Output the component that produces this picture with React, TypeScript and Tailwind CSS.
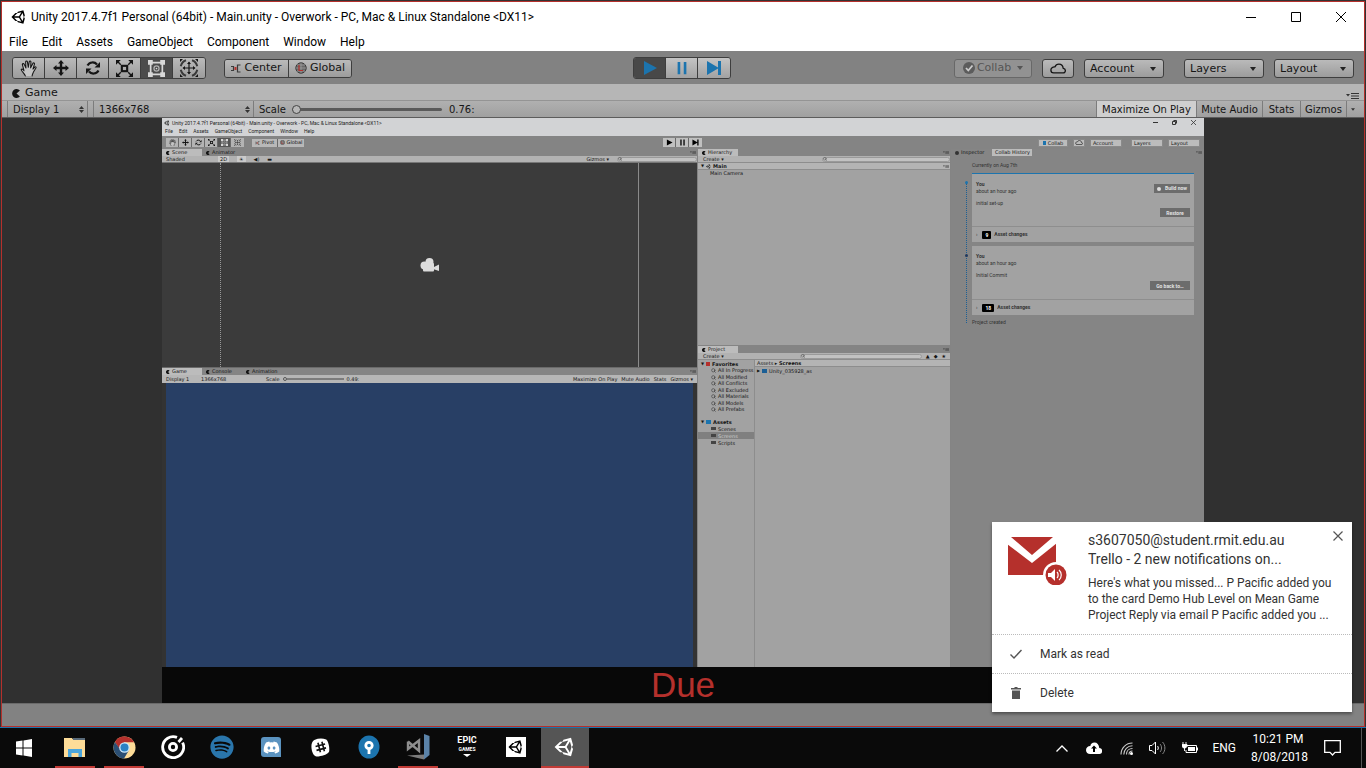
import React from "react";
import { FaUnity, FaSpotify, FaDiscord } from "react-icons/fa";
import { Search } from "lucide-react";

const segoe = "font-[Roboto,'Noto_Sans',sans-serif]";
const verdana = "font-['DejaVu_Sans',Verdana,sans-serif]";

/* ---------- shared pieces ---------- */

function HandIcon({ className }: { className: string }) {
  return (
    <svg viewBox="0 0 16 16" className={className} fill="#c4c4c4" stroke="currentColor" strokeWidth="1" strokeLinecap="round" strokeLinejoin="round">
      <path d="M5 15c-.6-2-3-3.600-3.900-6 .7-.9 1.900-.3 2.700 1.200L2.200 4.200c.2-1 1.400-1 1.800-.1L5.600 7.500 5.300 1.700c.2-.9 1.500-.9 1.700 0l.8 5.200 .9-5.400c.4-.9 1.600-.6 1.600.4L10 7.400l2.200-4.400c.6-.7 1.700-.1 1.400.8L12.200 8.500l1.900-2c.8-.3 1.300.4.9 1.100L12.800 11c-.6 1.700-1.200 2.500-1.400 4" />
    </svg>
  );
}
function MoveIcon({ className }: { className: string }) {
  return (
    <svg viewBox="0 0 16 16" className={className} fill="currentColor">
      <path d="M8 0l3 3.500H9.200v3.300h3.300V5L16 8l-3.500 3V9.200H9.200v3.300H11L8 16l-3-3.500h1.800V9.200H3.500V11L0 8l3.500-3v1.800h3.300V3.500H5z" />
    </svg>
  );
}
function RotateIcon({ className }: { className: string }) {
  return (
    <svg viewBox="0 0 16 16" className={className} fill="none" stroke="currentColor" strokeWidth="2.200">
      <path d="M2.500 5.500C4.500 1.800 9.500 1.500 12 4.500M13.500 10.500c-2 3.700-7 4-9.500 1" />
      <path d="M15 2v5.500H9.500zM1 14V8.500h5.500z" fill="currentColor" stroke="none" />
    </svg>
  );
}
function ScaleIcon({ className }: { className: string }) {
  return (
    <svg viewBox="0 0 16 16" className={className} fill="none" stroke="currentColor">
      <rect x="5.500" y="5.500" width="5" height="5" strokeWidth="2" />
      <path d="M1 1l3.500 3.500M15 1l-3.500 3.500M1 15l3.500-3.500M15 15l-3.500-3.500" strokeWidth="1.300" />
      <path d="M0 0h4.500L0 4.500zM16 0v4.500L11.500 0zM0 16v-4.500L4.500 16zM16 16h-4.500l4.500-4.500z" fill="currentColor" stroke="none" />
    </svg>
  );
}
function RectIcon({ className }: { className: string }) {
  return (
    <svg viewBox="0 0 16 16" className={className} fill="none" stroke="#d8d8d8">
      <path d="M2.500 2.500h11v11h-11z" strokeWidth="1.600" />
      <path d="M0 0h4.500v4.500H0zM11.500 0H16v4.500h-4.500zM0 11.500h4.500V16H0zM11.500 11.500H16V16h-4.500z" fill="#d8d8d8" stroke="none" />
      <circle cx="8" cy="8" r="2.400" stroke="#b0b0b0" strokeWidth="1.200" />
      <circle cx="8" cy="8" r=".8" fill="#d8d8d8" stroke="none" />
    </svg>
  );
}
function TransformIcon({ className }: { className: string }) {
  return (
    <svg viewBox="0 0 20 18" className={className} fill="none" stroke="currentColor">
      <path d="M10 3.500v11M4.500 9h11" strokeWidth="1.200" />
      <path d="M10 2.500l2 2.500H8zM10 15.500l2-2.500H8zM3.500 9L6 7v4zM16.500 9L14 7v4z" fill="currentColor" stroke="none" />
      <path d="M1.800 7.300c.6-2.800 2.500-5 5.200-6M18.200 7.300c-.6-2.800-2.500-5-5.200-6M1.800 10.700c.6 2.800 2.500 5 5.200 6M18.200 10.700c-.6 2.800-2.500 5-5.200 6" strokeWidth="2" stroke="#3a3a3a" />
      <path d="M1 0h3L1 3zM19 0v3L16 0zM1 18v-3L4 18zM19 18h-3l3-3z" fill="currentColor" stroke="none" />
    </svg>
  );
}
function PlayIcon({ className }: { className: string }) {
  return <svg viewBox="0 0 16 16" className={className} fill="currentColor"><path d="M2 1l13 7-13 7z" /></svg>;
}
function PauseIcon({ className }: { className: string }) {
  return <svg viewBox="0 0 16 16" className={className} fill="currentColor"><path d="M3 1h3v14H3zM10 1h3v14h-3z" /></svg>;
}
function StepIcon({ className }: { className: string }) {
  return <svg viewBox="0 0 16 16" className={className} fill="currentColor"><path d="M1 1l11 6.500V1h3v14h-3V8.500L1 15z" /></svg>;
}
function CloudIcon({ className }: { className: string }) {
  return (
    <svg viewBox="0 0 18 12" className={className} fill="none" stroke="currentColor" strokeWidth="1.500" strokeLinejoin="round">
      <path d="M4 11h10.500a2.600 2.600 0 0 0 .3-5.200C14.600 3 12.600 1 10 1 7.800 1 6.300 2.300 5.500 4.200 3 4 1 5.600 1 7.800 1 9.700 2.300 11 4 11z" />
    </svg>
  );
}
function GlobeIcon({ className }: { className: string }) {
  return (
    <svg viewBox="0 0 12 12" className={className} fill="none" stroke="#3c3c3c" strokeWidth="1">
      <circle cx="6" cy="6" r="5.200" fill="#6a6a6a" />
      <path d="M6 1v10M1 6h10M2 3h8M2 9h8" stroke="#a5a5a5" strokeWidth=".7" />
      <path d="M4 3v5.500h4" stroke="#b5302c" strokeWidth="1.200" />
    </svg>
  );
}
function PivotIcon({ className }: { className: string }) {
  return (
    <svg viewBox="0 0 10 9" className={className} fill="none" stroke="#3a3a3a">
      <path d="M0 2.500h2.500v4H0M9.500 1H6.500v7h3" strokeWidth="1.200" />
      <rect x="3.500" y="3" width="2" height="3" fill="#b5302c" stroke="none" />
    </svg>
  );
}
function PacIcon({ className }: { className: string }) {
  return <svg viewBox="0 0 10 10" className={className} fill="currentColor"><path d="M8.800 1.600A5 5 0 1 0 8.800 8.400L5 5z" /></svg>;
}
function MenuGlyph({ className }: { className: string }) {
  return (
    <svg viewBox="0 0 13 6" className={className}>
      <path d="M0 1h4L2 3.500z" fill="#333" />
      <path d="M5 .5h8M5 3h8M5 5.500h8" stroke="#333" strokeWidth="1" />
    </svg>
  );
}

const raised = "border border-[#3e3e3e] bg-linear-to-b from-[#bababa] to-[#9c9c9c]";

function ToolSelect({ label, width }: { label: string; width: string }) {
  return (
    <div className={`relative ${width}`}>
      <select aria-label={label} className={`block h-[19px] w-full appearance-none rounded-[3px] pt-px pl-[5px] leading-4 ${raised}`}>
        <option>{label}</option>
      </select>
      <svg viewBox="0 0 6 4" className="pointer-events-none absolute top-2 right-2 h-1 w-1.5"><path d="M0 0h6L3 4z" fill="#222" /></svg>
    </div>
  );
}
function BarSelect({ name, value, width }: { name: string; value: string; width: string }) {
  return (
    <div className={`relative border-x border-[#7c7c7c] ${width}`}>
      <select aria-label={name} className="block h-4 w-full appearance-none bg-transparent pl-[5px]">
        <option>{value}</option>
      </select>
      <svg viewBox="0 0 5 7" className="pointer-events-none absolute top-[5px] right-[3px] h-[7px] w-[5px]"><path d="M0 3l2.500-3L5 3zM0 4h5L2.500 7z" fill="#333" /></svg>
    </div>
  );
}

/* ---------- main toolbar ---------- */

function Toolbar() {
  const tools = [
    { name: "Hand", icon: <HandIcon className="size-[17px]" /> },
    { name: "Move", icon: <MoveIcon className="size-4" /> },
    { name: "Rotate", icon: <RotateIcon className="size-4" /> },
    { name: "Scale", icon: <ScaleIcon className="size-[17px]" /> },
    { name: "Rect", icon: <RectIcon className="size-[17px]" /> },
    { name: "Transform", icon: <TransformIcon className="h-[18px] w-5" /> },
  ];
  const play = [
    { name: "Play", icon: <PlayIcon className="size-4" /> },
    { name: "Pause", icon: <PauseIcon className="size-3.5" /> },
    { name: "Step", icon: <StepIcon className="size-4" /> },
  ];
  return (
    <div className={`grid h-[33px] grid-cols-[1fr_auto_1fr] items-center bg-[#828282] pt-px text-[11px] text-[#151515] ${verdana}`}>
      <div className="flex items-center pl-2.5">
        <div className="flex overflow-hidden rounded-[3px] border border-[#3e3e3e]">
          {tools.map((t, i) => (
            <button key={t.name} aria-label={t.name} className={`flex h-5 w-8 items-center justify-center border-[#3e3e3e] not-last:border-r ${i === 4 ? "bg-[#4c4c4c]" : "bg-linear-to-b from-[#bababa] to-[#9c9c9c]"}`}>
              {t.icon}
            </button>
          ))}
        </div>
        <div className="ml-[18px] flex h-[19px] overflow-hidden rounded-[3px] border border-[#3e3e3e]">
          <button className="flex w-16 items-center justify-center gap-[3px] border-r border-[#3e3e3e] bg-linear-to-b from-[#bababa] to-[#9c9c9c]">
            <PivotIcon className="h-[9px] w-2.5" />Center
          </button>
          <button className="flex w-[62px] items-center justify-center gap-[3px] bg-linear-to-b from-[#bababa] to-[#9c9c9c]">
            <GlobeIcon className="size-3" />Global
          </button>
        </div>
      </div>
      <div className="mr-0.5 flex overflow-hidden rounded-[3px] border border-[#3e3e3e] text-[#1c74ae]">
        {play.map((t, i) => (
          <button key={t.name} aria-label={t.name} className={`flex h-5 w-8 items-center justify-center border-[#3e3e3e] not-last:border-r ${i === 0 ? "bg-[#484848]" : "bg-linear-to-b from-[#c4c4c4] to-[#a2a2a2]"}`}>
            {t.icon}
          </button>
        ))}
      </div>
      <div className="flex items-center justify-end gap-2.5 pr-2.5">
        <button disabled className="flex h-[19px] w-[78px] items-center justify-center gap-0.5 rounded-[3px] border border-[#686868] bg-[#929292] text-[#555]">
          <svg viewBox="0 0 12 12" className="size-3"><circle cx="6" cy="6" r="6" fill="#5c5c5c" /><path d="M3 6l2.300 2.500L9.500 3.500" stroke="#ccc" strokeWidth="1.800" fill="none" /></svg>
          Collab
          <svg viewBox="0 0 6 4" className="ml-1 h-1 w-1.5"><path d="M0 0h6L3 4z" fill="#555" /></svg>
        </button>
        <button aria-label="Services" className={`flex h-[19px] w-8 items-center justify-center rounded-[3px] ${raised}`}><CloudIcon className="h-[11px] w-4" /></button>
        <ToolSelect label="Account" width="w-20" />
        <div className="w-0" />
        <ToolSelect label="Layers" width="w-20" />
        <ToolSelect label="Layout" width="w-20" />
      </div>
    </div>
  );
}

function GameHeader() {
  return (
    <div className={`text-[10px] text-[#151515] ${verdana}`}>
      <div className="flex h-[17px] items-center justify-between border-b border-[#949494] bg-[#b6b6b6] pl-2.5 text-[11px]">
        <span className="flex items-center gap-1 pt-0.5"><PacIcon className="size-[9px]" />Game</span>
        <MenuGlyph className="mt-2 mr-[5px] h-1.5 w-[13px]" />
      </div>
      <div className="flex h-[17px] items-center border-b border-[#5c5c5c] bg-linear-to-b from-[#b0b0b0] to-[#a0a0a0] pl-[5px]">
        <BarSelect name="Display" value="Display 1" width="w-[81px]" />
        <div className="w-[5px]" />
        <BarSelect name="Aspect" value="1366x768" width="w-[161px]" />
        <label htmlFor="scale" className="ml-[5px]">Scale</label>
        <input
          id="scale" type="range" min="0" max="100" defaultValue="0"
          className="ml-1.5 h-2.5 w-[150px] appearance-none bg-transparent [&::-webkit-slider-runnable-track]:h-[3px] [&::-webkit-slider-runnable-track]:rounded-full [&::-webkit-slider-runnable-track]:bg-[#5a5a5a] [&::-webkit-slider-thumb]:-mt-[3px] [&::-webkit-slider-thumb]:size-[9px] [&::-webkit-slider-thumb]:appearance-none [&::-webkit-slider-thumb]:rounded-full [&::-webkit-slider-thumb]:border [&::-webkit-slider-thumb]:border-[#444] [&::-webkit-slider-thumb]:bg-[#b8b8b8]"
        />
        <span className="ml-[7px]">0.76:</span>
        <div className="ml-auto flex h-full divide-x divide-[#7c7c7c] border-l border-[#7c7c7c] text-center">
          <button className="w-25 bg-[#cfcfcf]">Maximize On Play</button>
          <button className="w-[66px]">Mute Audio</button>
          <button className="w-[38px]">Stats</button>
          <button className="w-[46px]">Gizmos</button>
          <button aria-label="Gizmo options" className="mr-1.5 w-[11px]"><svg viewBox="0 0 6 4" className="mx-auto h-[3px] w-1"><path d="M0 0h6L3 4z" fill="#333" /></svg></button>
        </div>
      </div>
    </div>
  );
}

/* ---------- editor shown inside the game view ---------- */

const mini = "border border-[#8a8a8a] bg-[#bcbcbc]";

function MiniTop() {
  return (
    <>
      <div className={`h-[18px] bg-[#d2d3d5] text-[5px] leading-[8px] text-[#222] ${segoe}`}>
        <div className="flex h-[9px] items-center px-0.5">
          <FaUnity className="mr-0.5 size-[6px]" />
          Unity 2017.4.7f1 Personal (64bit) - Main.unity - Overwork - PC, Mac &amp; Linux Standalone &lt;DX11&gt;
          <span className="mr-1.5 ml-auto flex items-center gap-3.5">
            <svg viewBox="0 0 5 5" className="size-[5px]"><path d="M0 2.500h5" stroke="#333" /></svg>
            <svg viewBox="0 0 5 5" className="size-[5px]" fill="none" stroke="#333"><path d="M.5 1.500h3v3h-3zM1.500 .5h3v3" /></svg>
            <svg viewBox="0 0 5 5" className="size-[5px]"><path d="M0 0l5 5M5 0L0 5" stroke="#333" strokeWidth=".8" /></svg>
          </span>
        </div>
        <div className="flex gap-1.5 px-[3px]">
          {["File", "Edit", "Assets", "GameObject", "Component", "Window", "Help"].map((m) => <span key={m}>{m}</span>)}
        </div>
      </div>
      <div className="grid h-[13px] grid-cols-[1fr_auto_1fr] items-center text-[5px]">
        <div className="flex items-center gap-2 pl-1">
          <div className="flex divide-x divide-[#6a6a6a]">
            {[HandIcon, MoveIcon, RotateIcon, ScaleIcon, RectIcon, TransformIcon].map((Icon, i) => (
              <span key={i} className={`flex h-[9px] w-[13px] items-center justify-center ${i === 4 ? "bg-[#555]" : "bg-[#b4b4b4]"}`}><Icon className="size-[7px]" /></span>
            ))}
          </div>
          <div className="flex h-2 divide-x divide-[#6a6a6a] bg-[#b8b8b8]">
            <span className="flex w-[26px] items-center justify-center gap-0.5"><PivotIcon className="h-1 w-[5px]" />Pivot</span>
            <span className="flex w-[26px] items-center justify-center gap-0.5"><GlobeIcon className="size-[5px]" />Global</span>
          </div>
        </div>
        <div className="flex divide-x divide-[#6a6a6a] bg-[#c0c0c0] text-black">
          {[PlayIcon, PauseIcon, StepIcon].map((Icon, i) => (
            <span key={i} className="flex h-[9px] w-[13px] items-center justify-center"><Icon className="size-[7px]" /></span>
          ))}
        </div>
        <div className="flex justify-end gap-[5px] pr-1 leading-[6px]">
          <span className={`flex w-[30px] items-center justify-center gap-0.5 ${mini}`}><i className="h-1 w-[3px] bg-[#1c74ae]" />Collab</span>
          <span className={`flex w-3 items-center justify-center ${mini}`}><CloudIcon className="h-[5px] w-2" /></span>
          <span className={`mr-1 w-8 pl-0.5 ${mini}`}>Account</span>
          <span className={`w-8 pl-0.5 ${mini}`}>Layers</span>
          <span className={`w-8 pl-0.5 ${mini}`}>Layout</span>
        </div>
      </div>
    </>
  );
}

function MiniTabs({ tabs }: { tabs: string[] }) {
  return (
    <div className="flex h-[7px] items-center bg-[#848484] leading-[7px]">
      {tabs.map((t, i) => (
        <span key={t} className={`flex w-10 items-center gap-0.5 pl-1 ${i === 0 ? "bg-[#bcbcbc]" : ""}`}>
          <PacIcon className="size-1" />{t}
        </span>
      ))}
      <MenuGlyph className="mr-px ml-auto h-[3px] w-[6px]" />
    </div>
  );
}

function MiniSearch({ width }: { width: string }) {
  return (
    <span className={`flex h-[5px] items-center rounded-full border border-[#9a9a9a] bg-[#c2c2c2] ${width}`}><Search className="size-1" /></span>
  );
}

function CameraGizmo() {
  return (
    <svg viewBox="0 0 20 14" className="h-3.5 w-5" fill="#dcdcdc">
      <circle cx="4.500" cy="7.500" r="4" /><circle cx="9.500" cy="4" r="4" /><rect x="3" y="5" width="11" height="8.500" rx="1" /><path d="M13 9.500l6-3v6.500l-6-2z" />
    </svg>
  );
}

function ScenePanel() {
  return (
    <section className="flex h-[218px] flex-col">
      <MiniTabs tabs={["Scene", "Animator"]} />
      <div className="flex h-[7px] items-center gap-2 border-b border-[#777] bg-[#b2b2b2] pl-1 leading-[6px]">
        <span className="w-11">Shaded</span><span className="bg-[#cacaca] px-0.5">2D</span><span className="bg-[#cacaca] px-0.5">☀</span><span>◀)</span><span>▬</span>
        <span className="ml-auto">Gizmos ▾</span><MiniSearch width="w-20" />
      </div>
      <div className="grid flex-1 grid-cols-[59px_1fr_59px] bg-[#3b3b3b]">
        <div className="border-r border-dotted border-[#999]" />
        <div className="flex items-center justify-center"><CameraGizmo /></div>
        <div className="border-l border-[#8a8a8a]" />
      </div>
    </section>
  );
}

function MiniGamePanel() {
  return (
    <section className="flex flex-1 flex-col border-t border-[#6a6a6a]">
      <MiniTabs tabs={["Game", "Console", "Animation"]} />
      <div className="flex h-2 items-center bg-[#b6b6b6] px-1 leading-[6px]">
        <span className="w-[35px]">Display 1</span><span className="w-[65px]">1366x768</span><span>Scale</span>
        <i className="ml-1 size-1 rounded-full border border-[#555] bg-[#bbb]" /><i className="h-0.5 w-[57px] bg-[#7c7c7c]" /><span className="ml-0.5">0.49:</span>
        <span className="ml-auto flex gap-1"><span>Maximize On Play</span><span>Mute Audio</span><span>Stats</span><span>Gizmos ▾</span></span>
      </div>
      <div className="flex-1 border-x-4 border-[#333] bg-[#283f65]" />
    </section>
  );
}

function HierarchyPanel() {
  return (
    <section className="flex h-[196px] flex-col">
      <MiniTabs tabs={["Hierarchy"]} />
      <div className="flex h-[7px] items-center justify-between border-b border-[#8d8d8d] bg-[#b2b2b2] pl-[5px] leading-[6px]"><span>Create ▾</span><MiniSearch width="w-32" /></div>
      <div className="flex h-[7px] items-center gap-0.5 border-b border-[#8d8d8d] bg-[#b4b4b4] pl-[3px] font-bold leading-[6px]">
        <span className="text-[4px]">▼</span><FaUnity className="size-[5px]" />Main<MenuGlyph className="mr-px ml-auto h-[3px] w-[6px]" />
      </div>
      <div className="pl-3 leading-[7px]">Main Camera</div>
    </section>
  );
}

function ProjectPanel() {
  const favorites = ["All In Progress", "All Modified", "All Conflicts", "All Excluded", "All Materials", "All Models", "All Prefabs"];
  return (
    <section className="flex flex-1 flex-col border-t border-[#848484]">
      <MiniTabs tabs={["Project"]} />
      <div className="flex h-[7px] items-center border-b border-[#8d8d8d] bg-[#b2b2b2] pl-[5px] leading-[6px]">
        <span>Create ▾</span><span className="ml-auto"><MiniSearch width="w-[122px]" /></span><span className="ml-1 flex gap-1 pr-1"><i>▲</i><i>◆</i><i>★</i></span>
      </div>
      <div className="grid flex-1 grid-cols-[57px_1fr] leading-[6px]">
        <div className="border-r border-[#8d8d8d]">
          <div className="flex h-[7px] items-center gap-0.5 pl-[3px] font-bold"><span className="text-[4px]">▼</span><i className="size-1 bg-[#b5302c]" />Favorites</div>
          {favorites.map((f) => (
            <div key={f} className="flex h-1.5 items-center gap-0.5 pl-[13px] whitespace-nowrap odd:mt-px"><Search className="size-[5px]" />{f}</div>
          ))}
          <div className="mt-1.5 flex h-[7px] items-center gap-0.5 pl-[3px] font-bold"><span className="text-[4px]">▼</span><i className="h-1 w-[5px] bg-[#1c74ae]" />Assets</div>
          {["Scenes", "Screens", "Scripts"].map((f) => (
            <div key={f} className={`flex h-[7px] items-center gap-0.5 pl-[13px] ${f === "Screens" ? "bg-[#808080] text-[#ccc]" : ""}`}><i className="h-[3px] w-[5px] bg-[#444]" />{f}</div>
          ))}
        </div>
        <div>
          <div className="h-[7px] border-b border-[#8d8d8d] bg-[#b4b4b4] pl-0.5">Assets ▸ <b>Screens</b></div>
          <div className="flex items-center gap-0.5 pt-px pl-0.5"><span className="text-[4px]">▶</span><i className="h-1 w-[5px] bg-[#1c5f95]" />Unity_035928_as</div>
        </div>
      </div>
    </section>
  );
}

function HistoryCard({ note, build, action, count, active }: { note: string; build?: boolean; action: string; count: string; active?: boolean }) {
  return (
    <article className="relative mb-1 bg-[#a2a2a2] text-[#333]">
      <i className={`absolute top-2 -left-[7px] size-[3px] rounded-full ${active ? "bg-[#1c74ae]" : "bg-[#223a5e]"}`} />
      <div className={`flex h-[53px] justify-between pt-[7px] pr-1 pl-1 ${active ? "border-t border-[#1c74ae]" : ""}`}>
        <div className="leading-[7px]"><b className="block">You</b><span className="block">about an hour ago</span><span className="mt-[5px] block">{note}</span></div>
        <div className={`flex flex-col items-end gap-[15px] text-[#e2e2e2] ${build ? "pt-[3px]" : "pt-7"}`}>
          {build && <button className="flex h-[9px] w-9 items-center justify-center gap-1 bg-[#6c6c6c] font-bold"><i className="size-1 rounded-full bg-[#ddd]" />Build now</button>}
          <button className={`h-[9px] bg-[#6c6c6c] font-bold leading-[8px] ${build ? "w-[30px]" : "w-10"}`}>{action}</button>
        </div>
      </div>
      <div className="flex h-4 items-center gap-[3px] border-t border-[#8e8e8e] pl-1"><span>›</span><b className="ml-0.5 rounded-[1px] bg-black px-[3px] leading-[8px] text-white">{count}</b><b>Asset changes</b></div>
    </article>
  );
}

function HistoryPanel() {
  return (
    <section className="min-w-0 bg-[#858585]">
      <div className="flex h-[7px] items-center pl-1 leading-[7px]">
        <i className="mr-0.5 size-1 rounded-full bg-[#333]" /><span className="w-[31px]">Inspector</span><span className="w-10 bg-[#bcbcbc] pl-[3px] whitespace-nowrap">Collab History</span>
        <MenuGlyph className="mr-0.5 ml-auto h-[3px] w-[6px]" />
      </div>
      <div className={`pt-1.5 pr-2.5 pl-[21px] ${segoe}`}>
        <div className="mb-1 h-[7px] leading-[7px] text-[#333]">Currently on Aug 7th</div>
        <div className="relative">
          <i className="absolute top-2.5 -left-1.5 h-[140px] border-l border-dotted border-[#1c5f95]" />
          <HistoryCard note="initial set-up" build action="Restore" count="9" active />
          <HistoryCard note="Initial Commit" action="Go back to…" count="18" />
        </div>
        <div className="text-[#333]">Project created</div>
      </div>
    </section>
  );
}

function InnerEditor() {
  return (
    <div className={`flex flex-1 flex-col bg-[#848484] text-[5px] text-[#151515] ${verdana}`}>
      <MiniTop />
      <div className="grid flex-1 grid-cols-[535fr_252fr_253fr] gap-x-px">
        <div className="flex min-w-0 flex-col"><ScenePanel /><MiniGamePanel /></div>
        <div className="flex min-w-0 flex-col bg-[#a2a2a2]"><HierarchyPanel /><ProjectPanel /></div>
        <HistoryPanel />
      </div>
    </div>
  );
}

/* ---------- notification ---------- */

function Toast() {
  return (
    <aside className={`absolute right-3.5 bottom-14 w-[360px] bg-white text-[#333] shadow-[0_2px_3px_rgba(0,0,0,0.4)] ${segoe}`}>
      <div className="flex h-28 pt-[9px]">
        <svg viewBox="0 0 60 48" className="mt-1.5 ml-[15px] h-12 w-[60px] shrink-0">
          <path d="M1 0h48v38H1z" fill="#b5302c" />
          <path d="M0 0h4L25 18 46 0h4v6L25 26 0 7z" fill="#fff" />
          <circle cx="49" cy="38" r="13" fill="#fff" />
          <circle cx="49" cy="38" r="10.500" fill="#b5302c" />
          <path d="M41 36h3l4-4v12l-4-4h-3z" fill="#fff" />
          <path d="M50 35c1.500 1.500 1.500 4.500 0 6M52 33c3 2.500 3 7.500 0 10" stroke="#fff" strokeWidth="1.200" fill="none" />
        </svg>
        <div className="ml-[21px] min-w-0 flex-1">
          <h2 className="text-[14px] leading-[19px]">s3607050@student.rmit.edu.au<br />Trello - 2 new notifications on...</h2>
          <p className="mt-1.5 text-[12px] leading-4 whitespace-nowrap">Here's what you missed... P Pacific added you<br />to the card Demo Hub Level on Mean Game<br />Project Reply via email P Pacific added you ...</p>
        </div>
        <button aria-label="Close" className="absolute top-[9px] right-[9px]"><svg viewBox="0 0 10 10" className="size-2.5"><path d="M.5 .5l9 9M9.500 .5l-9 9" stroke="#555" strokeWidth="1.200" /></svg></button>
      </div>
      <button className="flex h-[39px] w-full items-center gap-[18px] border-t border-dotted border-[#bbb] pl-[18px] text-[12px]">
        <svg viewBox="0 0 12 10" className="h-2.5 w-3"><path d="M.5 5.500l3.500 3.500L11.500 1" fill="none" stroke="#555" strokeWidth="1.400" /></svg>Mark as read
      </button>
      <button className="flex h-[39px] w-full items-center gap-[18px] border-t border-dotted border-[#bbb] pl-[18px] text-[12px]">
        <svg viewBox="0 0 12 12" className="size-3" fill="#555"><path d="M1 1h3l1-1h2l1 1h3v1.500H1zM2 3.500h8V12H2z" /></svg>Delete
      </button>
    </aside>
  );
}

/* ---------- taskbar ---------- */

const taskIcons: { name: string; running?: boolean; icon: React.ReactNode }[] = [
  { name: "File Explorer", running: true, icon: (
    <svg viewBox="0 0 22 21" className="h-[21px] w-[22px]"><path d="M0 1h8l1.500 2H21v17H0z" fill="#fddc98" /><path d="M9 1h12v2H9z" fill="#5a6b7a" /><path d="M4 20v-8h14v8h-3.500v-4h-7v4z" fill="#4ba6dc" /></svg>) },
  { name: "Chrome", running: true, icon: (
    <svg viewBox="0 0 24 24" className="size-[23px]"><circle cx="12" cy="12" r="11.500" fill="#fddc98" /><path d="M2 6.300A11.500 11.500 0 0 1 22 6.500H12L7 14z" fill="#b5302c" /><path d="M2 6.300A11.500 11.500 0 0 0 11.500 23.500L16.500 15 7.500 14z" fill="#2b4f74" /><circle cx="12" cy="12" r="5.600" fill="#cde8fa" /><circle cx="12" cy="12" r="4.200" fill="#2c82c4" /></svg>) },
  { name: "Groove", icon: (
    <svg viewBox="0 0 24 24" className="size-6" fill="none" stroke="#fff"><path d="M16 2.400A10.500 10.500 0 1 0 21.600 7.600" strokeWidth="2.800" /><circle cx="12" cy="12" r="3.600" strokeWidth="2.800" /><path d="M17.500 7l3.500-4" strokeWidth="2.800" /></svg>) },
  { name: "Spotify", icon: <FaSpotify className="size-6 text-[#2a76ac]" /> },
  { name: "Discord", icon: (
    <span className="flex size-5 items-center justify-center rounded-[3px] rounded-br-none bg-[#5b93c0]"><FaDiscord className="size-[17px] text-white" /></span>) },
  { name: "Slack", icon: (
    <svg viewBox="0 0 20 20" className="size-[19px]"><path d="M3.500 2C8 .2 12 .2 16 1.500c2 1 4 9 3 13-1 2.500-6 4-11 5-3.500.5-5.500-1-7-6C-.2 8 .5 3.500 3.500 2z" fill="#fff" /><path d="M7.300 5l2.600 10M11.500 4l2.600 10M4.800 9l10-2.600M5.800 13l10-2.600" stroke="#111" strokeWidth="1.700" /></svg>) },
  { name: "Sourcetree", icon: (
    <svg viewBox="0 0 22 24" className="h-6 w-[22px]"><ellipse cx="11" cy="12" rx="10.500" ry="11.500" fill="#1c74ae" /><circle cx="11" cy="10.500" r="3.200" fill="none" stroke="#fff" strokeWidth="2.800" /><path d="M9.600 13.500h2.800V19H9.600z" fill="#fff" /></svg>) },
  { name: "Visual Studio", running: true, icon: (
    <svg viewBox="0 0 24 26" className="h-[26px] w-6" fill="none"><path d="M18 0l5.500 2v19L18 25.500z" fill="#5b83a8" /><path d="M18 25.500L1 21.500l17-1z" fill="#7c7c7c" /><path d="M2 7.500v7.500L13 6.500v10.500L2 7.500" stroke="#8e8e8e" strokeWidth="2.400" /></svg>) },
  { name: "Epic Games", icon: (
    <span className="flex h-6 w-[18px] flex-col items-center text-white font-[Roboto,sans-serif]">
      <span className="text-[9px] leading-[11px] font-bold">EPIC</span><span className="text-[5px] leading-[6px] font-bold">GAMES</span>
      <svg viewBox="0 0 8 3" className="mt-0.5 h-[3px] w-2"><path d="M0 0h8L4 3z" fill="#fff" /></svg>
    </span>) },
  { name: "Unity Hub", icon: <span className="flex size-5 items-center justify-center bg-white"><FaUnity className="size-4 text-black" /></span> },
  { name: "Unity", running: true, icon: <FaUnity className="size-[22px] text-white" /> },
];

function Taskbar() {
  return (
    <footer className={`flex h-10 bg-[#0a0a0a] text-[12px] text-white ${segoe}`}>
      <button aria-label="Start" className="mr-[3px] flex w-12 items-center justify-center">
        <svg viewBox="0 0 16 18" className="h-[18px] w-4" fill="#fff"><path d="M0 2.500L6.500 1.500V8.500H0zM7.500 1.400L16 0v8.500H7.500zM0 9.500h6.500v7L0 15.500zM7.500 9.500H16V18l-8.500-1.400z" /></svg>
      </button>
      <nav className="flex gap-px">
        {taskIcons.map((t) => (
          <button key={t.name} aria-label={t.name} className={`flex w-12 flex-col items-center ${t.name === "Unity" ? "bg-[#555]" : ""}`}>
            <span className="flex flex-1 items-center">{t.icon}</span>
            <i className={`h-0.5 ${t.name === "Unity" ? "w-full" : "w-10"} ${t.running ? "bg-[#c23b36]" : ""}`} />
          </button>
        ))}
      </nav>
      <div className="ml-auto flex items-center">
        <button aria-label="Show hidden icons" className="mr-[18px]"><svg viewBox="0 0 12 7" className="h-[7px] w-3"><path d="M.5 6.500L6 1l5.500 5.500" fill="none" stroke="#fff" strokeWidth="1.300" /></svg></button>
        <svg viewBox="0 0 16 12" className="mr-[18px] h-3 w-4"><path d="M4 12h9a3 3 0 0 0 .3-6C13 2.500 11 .5 8.500 .5 6 .5 4.800 2 4.300 4 1.800 4 0 5.800 0 8.200 0 10.500 1.800 12 4 12z" fill="#fff" /><path d="M8 3.500l3 3H9V10H7V6.500H5z" fill="#000" /></svg>
        <svg viewBox="0 0 13 13" className="mr-4 size-[13px]" fill="none"><path d="M9 12.500c0-2 1.500-3.500 3.500-3.500M6.500 12.500c0-3.500 2.500-6 6-6M3.800 12.500c0-5 3.700-8.700 8.700-8.700M1 12.500C1 6 6 1 12.500 1" stroke="#ccc" strokeWidth="1.100" /><circle cx="11.500" cy="11.500" r="1.500" fill="#fff" /></svg>
        <svg viewBox="0 0 17 14" className="mr-4 h-3.5 w-[17px]" fill="none" stroke="#fff"><path d="M.5 4.500h2.500L6.500 1v12L3 9.500H.5z" /><path d="M8.500 5c1 1 1 3 0 4" /><path d="M11 3c2 2 2 6 0 8M13.500 1c3.200 3.200 3.200 8.800 0 12" stroke="#888" /></svg>
        <svg viewBox="0 0 16 12" className="mr-3.5 h-3 w-4" fill="none" stroke="#fff"><path d="M5 3.500h9.500v7H4V8" /><path d="M6 5h7v4H6zM15 5.500h1v3h-1z" fill="#fff" stroke="none" /><path d="M1 0v2M4 0v2M0 2.500h5v2L3.500 6h-2L0 4.500zM2.500 6v3" fill="#fff" strokeWidth=".9" /></svg>
        <span>ENG</span>
        <time className="ml-[15px] w-[54px] text-center leading-[18px] whitespace-nowrap">10:21 PM<br />8/08/2018</time>
        <button aria-label="Action center" className="mr-5 ml-[19px]"><svg viewBox="0 0 17 16" className="h-4 w-[17px]"><path d="M.7 .7h15.600v11.600H11L8.500 15 6 12.300H.7z" fill="none" stroke="#fff" strokeWidth="1.300" /></svg></button>
        <i className="mr-1 h-full w-px bg-[#555]" />
      </div>
    </footer>
  );
}

export default function App() {
  return (
    <div className="relative flex min-h-screen flex-col overflow-hidden bg-[#333] text-black">
      <div className="flex flex-1 flex-col border-b border-[#1c74ae] px-px pt-px">
        <div className="flex flex-1 flex-col border border-[#b5302c]">
          <header className={`bg-white text-[12px] ${segoe}`}>
            <div className="flex h-[30px] items-center pl-[9px]">
              <FaUnity className="mr-1 size-4" />
              <h1 className="text-[12px]">Unity 2017.4.7f1 Personal (64bit) - Main.unity - Overwork - PC, Mac &amp; Linux Standalone &lt;DX11&gt;</h1>
              <div className="ml-auto flex gap-[35px] pr-[18px]">
                <button aria-label="Minimize"><svg viewBox="0 0 10 10" className="size-2.5"><path d="M0 5.500h10" stroke="#000" /></svg></button>
                <button aria-label="Maximize"><svg viewBox="0 0 10 10" className="size-2.5"><path d="M.5 .5h9v9h-9z" fill="none" stroke="#000" /></svg></button>
                <button aria-label="Close window"><svg viewBox="0 0 10 10" className="size-2.5"><path d="M0 0l10 10M10 0L0 10" stroke="#000" /></svg></button>
              </div>
            </div>
            <nav className="flex h-[19px] items-center gap-3.5 pl-[7px]">
              {["File", "Edit", "Assets", "GameObject", "Component", "Window", "Help"].map((m) => <button key={m}>{m}</button>)}
            </nav>
          </header>
          <Toolbar />
          <GameHeader />
          <main className="flex flex-1 justify-center bg-[#303030]">
            <div className="flex w-[76.5%] flex-col">
              <InnerEditor />
              <div className="h-9 bg-[#080808] text-center font-['Liberation_Sans',Arial,sans-serif] text-[35px] leading-9 text-[#b5302c]">Due</div>
            </div>
          </main>
          <div className="h-[23px] border-t border-[#6a6a6a] bg-[#828282]" />
        </div>
      </div>
      <Taskbar />
      <Toast />
    </div>
  );
}
